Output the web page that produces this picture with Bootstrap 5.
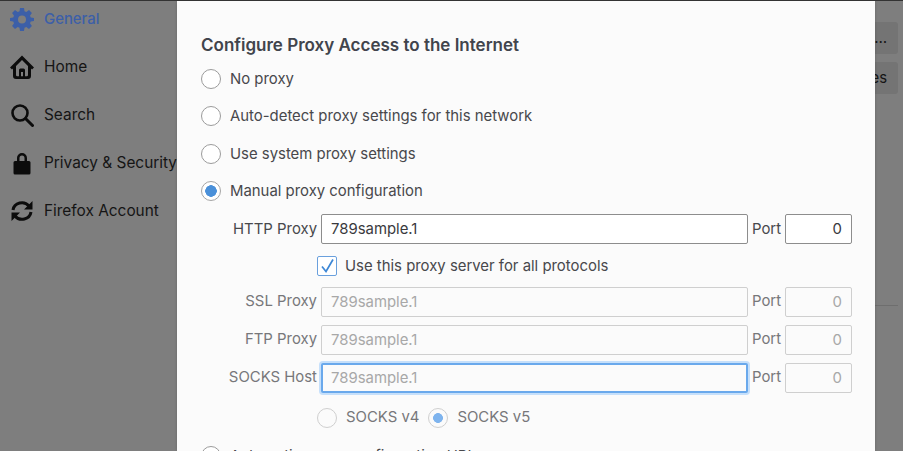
<!DOCTYPE html>
<html lang="en">
<head>
<meta charset="utf-8">
<title>Connection Settings</title>
<link rel="stylesheet" href="https://cdn.jsdelivr.net/npm/bootstrap@5.3.0/dist/css/bootstrap.min.css">
<style>
html,body{height:451px;overflow:hidden}
body{background:#7e7e7e;font-family:Inter,"Liberation Sans",sans-serif;color:#48484c;font-size:14.9px}
.topline{height:1px;background:#333}
.stage{height:450px;overflow:hidden}
.side{width:177px;flex:none;overflow:hidden}
.side-item{height:48px;padding-left:10px;gap:10px;color:#151515;font-size:15.4px;white-space:nowrap}
.side-item.active-item{color:#3c5fa8;font-weight:500;font-size:14.9px}
.side-item svg{width:24px;height:24px;flex:none}
.side-list{margin-top:-6px}
.dialog{width:698px;flex:none;background:#fbfbfb;padding:31px 23px 0 24px;height:450px;overflow:hidden;box-shadow:0 0 3px rgba(0,0,0,.18);position:relative;z-index:1}
.dlg-title{font-size:17px;font-weight:600;color:#41444c;margin:0;line-height:26px;height:28.3px}
.opt{height:37.4px;gap:9px;line-height:20px;white-space:nowrap}
.opt .form-check-input{width:20px;height:20px;margin:0;flex:none;background-color:#fff;border:1px solid #9b9b9b;opacity:1}
.opt .form-check-input:checked{background-color:#fff;border-color:#a5a5a5;background-image:radial-gradient(circle,#4a90d9 0,#4a90d9 5.5px,transparent 6px)}
.fld-row{height:38px;white-space:nowrap}
.fld-label{width:120px;flex:none;text-align:right;padding-right:4px}
.fld-main.form-control{width:427px;flex:none;height:30px;border-radius:2px;border:1px solid #8d8d8d;background:#fff;color:#3a3a3e;padding:0 9px;font-size:14.9px}
.fld-port{width:37px;flex:none;text-align:center}
.fld-num.form-control{width:67px;flex:none;height:30px;border-radius:2px;border:1px solid #8d8d8d;background:#fff;color:#3a3a3e;padding:0 9px;text-align:right;font-size:14.9px}
.is-off .fld-label,.is-off .fld-port{color:#77777a}
.is-off .form-control{background:#fbfbfb;border-color:#cfcfcf;color:#a8a8a8;opacity:1}
.is-off .form-control.ring{border:2px solid #6aa9ec;box-shadow:0 0 0 2px #c6e0fb;padding:0 8px}
.chk-row{height:32.7px;padding-left:116px;gap:8px;margin-top:2px;margin-bottom:0;white-space:nowrap}
.chk-row .form-check-input{width:20px;height:20px;margin:0;border-radius:2px;border:1px solid #6aa0dd;background-color:#fff;flex:none;opacity:1}
.chk-row .form-check-input:checked{background-image:none;background-color:#fff}
.chk-wrap{position:relative;width:20px;height:20px;flex:none}
.chk-wrap svg{position:absolute;left:3px;top:2px;width:15px;height:16px;pointer-events:none}
.socks-row{padding-left:116px;height:42px;gap:9px;color:#77777a;white-space:nowrap}
.socks-row .form-check-input{width:20px;height:20px;margin:0;background-color:#fbfbfb;border:1px solid #cfcfcf;opacity:1;flex:none}
.socks-row .form-check-input:checked{background-color:#fbfbfb;background-image:radial-gradient(circle,#7fb4ee 0,#7fb4ee 4.6px,transparent 5.2px)}
.socks-row span{margin-right:0}
.auto-row{margin-top:-1px}
.behind{flex:1 1 auto;overflow:hidden;padding-top:21px}
.behind-btn{width:23px;height:32px;background:#747474;border-radius:0 3px 3px 0;margin-bottom:8px;overflow:hidden;color:#151515;padding-right:11px;white-space:nowrap}
.behind-rule{height:1px;background:#6e6e6e;width:23px;margin-top:211px}
</style>
</head>
<body>
<div class="topline"></div>
<div class="stage d-flex">
  <nav class="side">
    <div class="side-list">
      <div class="side-item active-item d-flex align-items-center">
        <svg viewBox="0 0 24 24"><path fill="#3c5fa8" fill-rule="evenodd" d="M10 1h4l.5 3.200 1.800.8L19 3.100 21.900 6 20 8.700l.8 1.800L24 11v3l-3.200.5-.8 1.800L21.900 19 19 21.900 16.300 20l-1.800.8L14 24h-4l-.5-3.200-1.800-.8L5 21.900 2.100 19 4 16.300l-.8-1.800L0 14v-3l3.200-.5.8-1.800L2.100 6 5 3.100 7.700 5l1.800-.8zM12 8.500a4 4 0 1 0 0 8 4 4 0 0 0 0-8z"/></svg>
        <span>General</span>
      </div>
      <div class="side-item d-flex align-items-center">
        <svg viewBox="0 0 24 24"><path fill="#0c0c0c" fill-rule="evenodd" d="M12 .5 24 12.500 22 14.600l-1-1V21a3 3 0 0 1-3 3H6a3 3 0 0 1-3-3v-7.400l-1 1L0 12.500zm0 4.500L6 11v9a1.200 1.200 0 0 0 1.200 1.200H9V15a1.500 1.500 0 0 1 1.500-1.500h3A1.500 1.500 0 0 1 15 15v6.200h1.800A1.200 1.200 0 0 0 18 20v-9zM11 17v4.200h2V17z"/></svg>
        <span>Home</span>
      </div>
      <div class="side-item d-flex align-items-center">
        <svg viewBox="0 0 24 24"><circle cx="10" cy="10" r="7.500" fill="none" stroke="#0c0c0c" stroke-width="2.600"/><path d="M15.500 15.500 22.500 22.500" stroke="#0c0c0c" stroke-width="3" stroke-linecap="round"/></svg>
        <span>Search</span>
      </div>
      <div class="side-item d-flex align-items-center">
        <svg viewBox="0 0 24 24"><path fill="#0c0c0c" d="M7 10V7a5 5 0 0 1 10 0v3h2a1.500 1.500 0 0 1 1.500 1.500V22a1.500 1.500 0 0 1-1.500 1.500H5A1.500 1.500 0 0 1 3.500 22V11.500A1.500 1.500 0 0 1 5 10zm2.500 0h5V7a2.500 2.500 0 0 0-5 0z"/></svg>
        <span>Privacy &amp; Security</span>
      </div>
      <div class="side-item d-flex align-items-center">
        <svg viewBox="0 0 24 24"><g fill="none" stroke="#0c0c0c" stroke-width="3"><path d="M3 11a9 8.500 0 0 1 16-4"/><path d="M21 13a9 8.500 0 0 1-16 4"/></g><path fill="#0c0c0c" d="M22.500 2v8.500H14zM1.500 22v-8.500H10z"/></svg>
        <span>Firefox Account</span>
      </div>
    </div>
  </nav>
  <main class="dialog">
    <h1 class="dlg-title">Configure Proxy Access to the Internet</h1>
    <div class="opt d-flex align-items-center"><input class="form-check-input" type="radio" name="px"><span>No proxy</span></div>
    <div class="opt d-flex align-items-center"><input class="form-check-input" type="radio" name="px"><span>Auto-detect proxy settings for this network</span></div>
    <div class="opt d-flex align-items-center"><input class="form-check-input" type="radio" name="px"><span>Use system proxy settings</span></div>
    <div class="opt d-flex align-items-center"><input class="form-check-input" type="radio" name="px" checked><span>Manual proxy configuration</span></div>
    <div class="fld-row d-flex align-items-center">
      <span class="fld-label">HTTP Proxy</span>
      <input class="form-control fld-main" type="text" value="789sample.1">
      <span class="fld-port">Port</span>
      <input class="form-control fld-num" type="text" value="0">
    </div>
    <div class="chk-row d-flex align-items-center">
      <span class="chk-wrap"><input class="form-check-input d-block" type="checkbox" checked><svg viewBox="0 0 15 16"><path d="M2 8.500 6 13.500 13 1.500" fill="none" stroke="#3d87d6" stroke-width="1.700"/></svg></span>
      <span>Use this proxy server for all protocols</span>
    </div>
    <div class="is-off">
      <div class="fld-row d-flex align-items-center">
        <span class="fld-label">SSL Proxy</span>
        <input class="form-control fld-main" type="text" value="789sample.1" disabled>
        <span class="fld-port">Port</span>
        <input class="form-control fld-num" type="text" value="0" disabled>
      </div>
      <div class="fld-row d-flex align-items-center">
        <span class="fld-label">FTP Proxy</span>
        <input class="form-control fld-main" type="text" value="789sample.1" disabled>
        <span class="fld-port">Port</span>
        <input class="form-control fld-num" type="text" value="0" disabled>
      </div>
      <div class="fld-row d-flex align-items-center">
        <span class="fld-label">SOCKS Host</span>
        <input class="form-control fld-main ring" type="text" value="789sample.1" disabled>
        <span class="fld-port">Port</span>
        <input class="form-control fld-num" type="text" value="0" disabled>
      </div>
    </div>
    <div class="socks-row d-flex align-items-center">
      <input class="form-check-input" type="radio" name="sk"><span>SOCKS v4</span>
      <input class="form-check-input" type="radio" name="sk" checked><span>SOCKS v5</span>
    </div>
    <div class="opt auto-row d-flex align-items-center"><input class="form-check-input" type="radio" name="px"><span>Automatic proxy configuration URL</span></div>
  </main>
  <aside class="behind">
    <div class="behind-btn d-flex align-items-center justify-content-end">…</div>
    <div class="behind-btn d-flex align-items-center justify-content-end">es</div>
    <div class="behind-rule"></div>
  </aside>
</div>
<script src="https://cdn.jsdelivr.net/npm/bootstrap@5.3.0/dist/js/bootstrap.bundle.min.js"></script>
</body>
</html>
